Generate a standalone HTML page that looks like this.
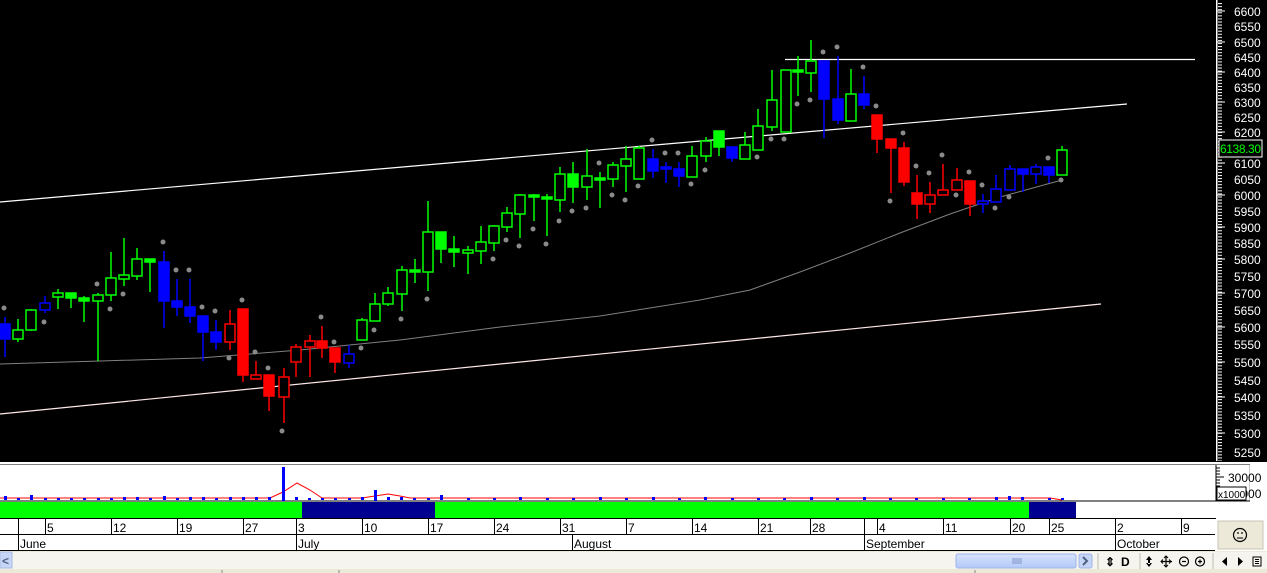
<!DOCTYPE html>
<html><head><meta charset="utf-8"><style>
html,body{margin:0;padding:0;width:1267px;height:573px;overflow:hidden;background:#fff}
svg{display:block}
text{font-family:"Liberation Sans",sans-serif}
</style></head><body>
<svg width="1267" height="573" viewBox="0 0 1267 573" xmlns="http://www.w3.org/2000/svg">
<defs>
<pattern id="tk" x="0" y="0" width="6" height="3.07" patternUnits="userSpaceOnUse"><rect x="0" y="0" width="5" height="1" fill="#fff"/></pattern>
<linearGradient id="thumb" x1="0" y1="0" x2="0" y2="1"><stop offset="0" stop-color="#d6e2fd"/><stop offset="1" stop-color="#b3c9f7"/></linearGradient>
</defs>
<rect x="0" y="0" width="1267" height="462" fill="#000"/>
<!-- axis -->
<rect x="1216" y="0" width="1.5" height="461" fill="#fff"/>
<rect x="1217" y="2" width="5" height="459" fill="url(#tk)"/>
<g fill="#fff" font-size="12">
<text x="1234" y="16">6600</text><text x="1234" y="31">6550</text><text x="1234" y="47">6500</text><text x="1234" y="62">6450</text><text x="1234" y="77">6400</text><text x="1234" y="92">6350</text><text x="1234" y="107">6300</text><text x="1234" y="122">6250</text><text x="1234" y="137">6200</text><text x="1234" y="168">6100</text><text x="1234" y="184">6050</text><text x="1234" y="200">6000</text><text x="1234" y="216">5950</text><text x="1234" y="232">5900</text><text x="1234" y="248">5850</text><text x="1234" y="264">5800</text><text x="1234" y="281">5750</text><text x="1234" y="298">5700</text><text x="1234" y="315">5650</text><text x="1234" y="332">5600</text><text x="1234" y="349">5550</text><text x="1234" y="367">5500</text><text x="1234" y="385">5450</text><text x="1234" y="402">5400</text><text x="1234" y="420">5350</text><text x="1234" y="438">5300</text><text x="1234" y="457">5250</text>
</g>
<g stroke="#fff" stroke-width="1">
<line x1="1217" y1="11" x2="1225" y2="11"/><line x1="1217" y1="42" x2="1225" y2="42"/><line x1="1217" y1="72" x2="1225" y2="72"/><line x1="1217" y1="102" x2="1225" y2="102"/><line x1="1217" y1="132" x2="1225" y2="132"/><line x1="1217" y1="163" x2="1225" y2="163"/><line x1="1217" y1="195" x2="1225" y2="195"/><line x1="1217" y1="227" x2="1225" y2="227"/><line x1="1217" y1="259" x2="1225" y2="259"/><line x1="1217" y1="293" x2="1225" y2="293"/><line x1="1217" y1="327" x2="1225" y2="327"/><line x1="1217" y1="362" x2="1225" y2="362"/><line x1="1217" y1="397" x2="1225" y2="397"/><line x1="1217" y1="433" x2="1225" y2="433"/>
</g>
<rect x="1219" y="140" width="43" height="17" fill="#000" stroke="#fff" stroke-width="1"/>
<text x="1220" y="153" fill="#00ff00" font-size="12" textLength="41">6138.30</text>
<!-- lines -->
<line x1="0" y1="202" x2="1127" y2="104" stroke="#fff" stroke-width="1.2"/>
<line x1="0" y1="414" x2="1101" y2="304" stroke="#ffe8e8" stroke-width="1.2"/>
<line x1="785" y1="59.5" x2="1195" y2="59.5" stroke="#fff" stroke-width="1.2"/>
<polyline fill="none" stroke="#808080" stroke-width="1" points="0,364 100,361 200,358 300,350 400,340 500,327 600,316 700,300 750,290 800,272 850,253 900,233 950,214 1000,197 1062,180"/>
<!-- dots -->
<g fill="#8a8a8a">
<circle cx="4" cy="308" r="2.5"/><circle cx="44" cy="322" r="2.5"/><circle cx="97" cy="284" r="2.5"/><circle cx="110" cy="309" r="2.5"/><circle cx="123" cy="294" r="2.5"/><circle cx="163" cy="242" r="2.5"/><circle cx="176" cy="270" r="2.5"/><circle cx="189" cy="270" r="2.5"/><circle cx="202" cy="307" r="2.5"/><circle cx="215" cy="311" r="2.5"/><circle cx="229" cy="358" r="2.5"/><circle cx="242" cy="300" r="2.5"/><circle cx="255" cy="352" r="2.5"/><circle cx="268" cy="368" r="2.5"/><circle cx="282" cy="431" r="2.5"/><circle cx="321" cy="317" r="2.5"/><circle cx="334" cy="342" r="2.5"/><circle cx="361" cy="348" r="2.5"/><circle cx="374" cy="330" r="2.5"/><circle cx="401" cy="319" r="2.5"/><circle cx="427" cy="299" r="2.5"/><circle cx="493" cy="259" r="2.5"/><circle cx="506" cy="240" r="2.5"/><circle cx="519" cy="246" r="2.5"/><circle cx="533" cy="229" r="2.5"/><circle cx="546" cy="244" r="2.5"/><circle cx="559" cy="221" r="2.5"/><circle cx="572" cy="211" r="2.5"/><circle cx="586" cy="208" r="2.5"/><circle cx="599" cy="163" r="2.5"/><circle cx="612" cy="195" r="2.5"/><circle cx="625" cy="200" r="2.5"/><circle cx="638" cy="186" r="2.5"/><circle cx="652" cy="140" r="2.5"/><circle cx="665" cy="153" r="2.5"/><circle cx="678" cy="153" r="2.5"/><circle cx="691" cy="184" r="2.5"/><circle cx="705" cy="170" r="2.5"/><circle cx="757" cy="157" r="2.5"/><circle cx="771" cy="139" r="2.5"/><circle cx="784" cy="139" r="2.5"/><circle cx="797" cy="104" r="2.5"/><circle cx="810" cy="100" r="2.5"/><circle cx="823" cy="52" r="2.5"/><circle cx="837" cy="47" r="2.5"/><circle cx="863" cy="67" r="2.5"/><circle cx="876" cy="106" r="2.5"/><circle cx="890" cy="201" r="2.5"/><circle cx="903" cy="133" r="2.5"/><circle cx="916" cy="166" r="2.5"/><circle cx="929" cy="173" r="2.5"/><circle cx="942" cy="155" r="2.5"/><circle cx="956" cy="195" r="2.5"/><circle cx="969" cy="172" r="2.5"/><circle cx="982" cy="185" r="2.5"/><circle cx="995" cy="208" r="2.5"/><circle cx="1009" cy="197" r="2.5"/><circle cx="1048" cy="158" r="2.5"/><circle cx="1061" cy="180" r="2.5"/>
</g>
<!-- candles -->
<g stroke-width="1.5">
<g stroke="#0000ff" fill="#0000ff">
<line x1="5" y1="317" x2="5" y2="357"/><rect x="0" y="324" width="10" height="15"/>
<line x1="164" y1="251" x2="164" y2="328"/><rect x="159" y="262" width="10" height="39"/>
<line x1="177" y1="279" x2="177" y2="316"/><rect x="172" y="301" width="10" height="6"/>
<line x1="190" y1="279" x2="190" y2="323"/><rect x="185" y="307" width="10" height="9"/>
<line x1="203" y1="316" x2="203" y2="361"/><rect x="198" y="316" width="10" height="16"/>
<line x1="216" y1="320" x2="216" y2="350"/><rect x="211" y="332" width="10" height="10"/>
<line x1="653" y1="149" x2="653" y2="178"/><rect x="648" y="159" width="10" height="12"/>
<line x1="666" y1="162" x2="666" y2="183"/><rect x="661" y="167" width="10" height="2"/>
<line x1="679" y1="162" x2="679" y2="187"/><rect x="674" y="169" width="10" height="7"/>
<line x1="732" y1="146" x2="732" y2="162"/><rect x="727" y="147" width="10" height="11"/>
<line x1="824" y1="61" x2="824" y2="138"/><rect x="819" y="61" width="10" height="38"/>
<line x1="838" y1="56" x2="838" y2="124"/><rect x="833" y="99" width="10" height="21"/>
<line x1="864" y1="76" x2="864" y2="109"/><rect x="859" y="94" width="10" height="11"/>
<line x1="1023" y1="169" x2="1023" y2="192"/><rect x="1018" y="169" width="10" height="5"/>
<line x1="1049" y1="167" x2="1049" y2="183"/><rect x="1044" y="167" width="10" height="8"/>
</g>
<g stroke="#0000ff" fill="#000">
<line x1="45" y1="296" x2="45" y2="313"/><rect x="40" y="303" width="10" height="7"/>
<line x1="349" y1="345" x2="349" y2="368"/><rect x="344" y="354" width="10" height="9"/>
<line x1="983" y1="194" x2="983" y2="213"/><rect x="978" y="201" width="10" height="3"/>
<line x1="996" y1="175" x2="996" y2="202"/><rect x="991" y="189" width="10" height="13"/>
<line x1="1010" y1="165" x2="1010" y2="190"/><rect x="1005" y="169" width="10" height="21"/>
<line x1="1036" y1="164" x2="1036" y2="184"/><rect x="1031" y="167" width="10" height="7"/>
</g>
<g stroke="#ff0000" fill="#ff0000">
<line x1="243" y1="309" x2="243" y2="382"/><rect x="238" y="309" width="10" height="66"/>
<line x1="269" y1="375" x2="269" y2="411"/><rect x="264" y="375" width="10" height="21"/>
<line x1="322" y1="326" x2="322" y2="358"/><rect x="317" y="341" width="10" height="7"/>
<line x1="335" y1="348" x2="335" y2="373"/><rect x="330" y="348" width="10" height="14"/>
<line x1="877" y1="115" x2="877" y2="153"/><rect x="872" y="115" width="10" height="24"/>
<line x1="891" y1="139" x2="891" y2="193"/><rect x="886" y="139" width="10" height="9"/>
<line x1="904" y1="142" x2="904" y2="186"/><rect x="899" y="148" width="10" height="34"/>
<line x1="917" y1="175" x2="917" y2="219"/><rect x="912" y="193" width="10" height="11"/>
<line x1="970" y1="181" x2="970" y2="216"/><rect x="965" y="181" width="10" height="23"/>
</g>
<g stroke="#ff0000" fill="#000">
<line x1="230" y1="310" x2="230" y2="350"/><rect x="225" y="324" width="10" height="18"/>
<line x1="256" y1="361" x2="256" y2="379"/><rect x="251" y="375" width="10" height="4"/>
<line x1="284" y1="368" x2="284" y2="423"/><rect x="279" y="377" width="10" height="20"/>
<line x1="296" y1="344" x2="296" y2="377"/><rect x="291" y="347" width="10" height="15"/>
<line x1="310" y1="335" x2="310" y2="377"/><rect x="305" y="341" width="10" height="6"/>
<line x1="930" y1="182" x2="930" y2="213"/><rect x="925" y="195" width="10" height="9"/>
<line x1="943" y1="164" x2="943" y2="195"/><rect x="938" y="190" width="10" height="5"/>
<line x1="957" y1="168" x2="957" y2="190"/><rect x="952" y="180" width="10" height="10"/>
</g>
<g stroke="#00ff00" fill="#00ff00">
<line x1="71" y1="293" x2="71" y2="308"/><rect x="66" y="293" width="10" height="5"/>
<line x1="84" y1="296" x2="84" y2="322"/><rect x="79" y="298" width="10" height="3"/>
<line x1="150" y1="259" x2="150" y2="292"/><rect x="145" y="259" width="10" height="3"/>
<line x1="415" y1="259" x2="415" y2="283"/><rect x="410" y="270" width="10" height="2"/>
<line x1="441" y1="232" x2="441" y2="263"/><rect x="436" y="232" width="10" height="17"/>
<line x1="454" y1="236" x2="454" y2="267"/><rect x="449" y="249" width="10" height="3"/>
<line x1="534" y1="194" x2="534" y2="221"/><rect x="529" y="195" width="10" height="2"/>
<line x1="547" y1="194" x2="547" y2="236"/><rect x="542" y="197" width="10" height="2"/>
<line x1="573" y1="162" x2="573" y2="203"/><rect x="568" y="174" width="10" height="13"/>
<line x1="600" y1="172" x2="600" y2="208"/><rect x="595" y="178" width="10" height="2"/>
<line x1="719" y1="131" x2="719" y2="156"/><rect x="714" y="131" width="10" height="16"/>
<line x1="798" y1="56" x2="798" y2="96"/><rect x="793" y="70" width="10" height="2"/>
</g>
<g stroke="#00ff00" fill="#000">
<line x1="18" y1="319" x2="18" y2="342"/><rect x="13" y="330" width="10" height="9"/>
<line x1="31" y1="309" x2="31" y2="331"/><rect x="26" y="310" width="10" height="20"/>
<line x1="58" y1="289" x2="58" y2="309"/><rect x="53" y="293" width="10" height="4"/>
<line x1="98" y1="293" x2="98" y2="361"/><rect x="93" y="295" width="10" height="6"/>
<line x1="111" y1="252" x2="111" y2="301"/><rect x="106" y="278" width="10" height="17"/>
<line x1="124" y1="238" x2="124" y2="286"/><rect x="119" y="275" width="10" height="4"/>
<line x1="137" y1="248" x2="137" y2="280"/><rect x="132" y="259" width="10" height="17"/>
<line x1="362" y1="318" x2="362" y2="340"/><rect x="357" y="320" width="10" height="20"/>
<line x1="375" y1="293" x2="375" y2="321"/><rect x="370" y="304" width="10" height="17"/>
<line x1="388" y1="287" x2="388" y2="306"/><rect x="383" y="293" width="10" height="11"/>
<line x1="402" y1="266" x2="402" y2="311"/><rect x="397" y="270" width="10" height="24"/>
<line x1="428" y1="201" x2="428" y2="291"/><rect x="423" y="232" width="10" height="40"/>
<line x1="468" y1="246" x2="468" y2="274"/><rect x="463" y="250" width="10" height="3"/>
<line x1="481" y1="226" x2="481" y2="264"/><rect x="476" y="242" width="10" height="9"/>
<line x1="494" y1="225" x2="494" y2="251"/><rect x="489" y="226" width="10" height="17"/>
<line x1="507" y1="207" x2="507" y2="232"/><rect x="502" y="213" width="10" height="14"/>
<line x1="520" y1="194" x2="520" y2="238"/><rect x="515" y="195" width="10" height="19"/>
<line x1="560" y1="167" x2="560" y2="212"/><rect x="555" y="174" width="10" height="26"/>
<line x1="587" y1="149" x2="587" y2="200"/><rect x="582" y="176" width="10" height="11"/>
<line x1="613" y1="162" x2="613" y2="187"/><rect x="608" y="165" width="10" height="14"/>
<line x1="626" y1="146" x2="626" y2="192"/><rect x="621" y="159" width="10" height="7"/>
<line x1="639" y1="146" x2="639" y2="179"/><rect x="634" y="148" width="10" height="31"/>
<line x1="692" y1="146" x2="692" y2="177"/><rect x="687" y="156" width="10" height="21"/>
<line x1="706" y1="137" x2="706" y2="162"/><rect x="701" y="141" width="10" height="15"/>
<line x1="745" y1="132" x2="745" y2="159"/><rect x="740" y="145" width="10" height="14"/>
<line x1="758" y1="109" x2="758" y2="150"/><rect x="753" y="126" width="10" height="24"/>
<line x1="772" y1="70" x2="772" y2="131"/><rect x="767" y="100" width="10" height="27"/>
<line x1="786" y1="70" x2="786" y2="132"/><rect x="781" y="70" width="10" height="62"/>
<line x1="811" y1="40" x2="811" y2="92"/><rect x="806" y="61" width="10" height="12"/>
<line x1="851" y1="69" x2="851" y2="121"/><rect x="846" y="94" width="10" height="27"/>
<line x1="1062" y1="146" x2="1062" y2="175"/><rect x="1057" y="150" width="10" height="25"/>
</g>
</g>
<!-- separator -->
<rect x="0" y="462" width="1267" height="2" fill="#fff"/>
<rect x="0" y="464" width="1250" height="1" fill="#808080"/>
<!-- volume panel -->
<rect x="0" y="465" width="1250" height="36" fill="#fff"/>
<rect x="1249" y="465" width="1" height="36" fill="#ccc"/>
<line x1="1216" y1="465" x2="1216" y2="501" stroke="#000" stroke-width="1"/>
<g stroke="#000"><line x1="1216" y1="468" x2="1220" y2="468"/><line x1="1216" y1="471" x2="1220" y2="471"/><line x1="1216" y1="474" x2="1220" y2="474"/><line x1="1216" y1="477" x2="1224" y2="477"/><line x1="1216" y1="480" x2="1220" y2="480"/><line x1="1216" y1="483" x2="1220" y2="483"/><line x1="1216" y1="486" x2="1220" y2="486"/></g>
<text x="1228" y="482" font-size="12" fill="#000">30000</text>
<text x="1228" y="498" font-size="12" fill="#000">10000</text>
<rect x="1217" y="487" width="29" height="13" fill="#fff" stroke="#000" stroke-width="1"/>
<text x="1218" y="498" font-size="10" fill="#000">x1000</text>
<line x1="0" y1="501" x2="1250" y2="501" stroke="#000" stroke-width="1"/>
<polyline fill="none" stroke="#ff0000" stroke-width="1" points="0,498 270,498 283,492 297,483 310,490 322,498 362,498 375,496 388,494 400,496 410,498 640,498 1050,498 1062,500"/>
<g fill="#0000ff">
<rect x="282" y="467" width="3" height="34"/><rect x="374" y="490" width="3" height="11"/>
<rect x="4" y="496" width="3" height="4"/><rect x="17" y="498" width="3" height="2"/><rect x="30" y="495" width="3" height="5"/><rect x="44" y="498" width="3" height="2"/><rect x="57" y="498" width="3" height="2"/><rect x="70" y="498" width="3" height="2"/><rect x="83" y="498" width="3" height="2"/><rect x="97" y="498" width="3" height="2"/><rect x="110" y="498" width="3" height="2"/><rect x="123" y="497" width="3" height="3"/><rect x="136" y="497" width="3" height="3"/><rect x="149" y="498" width="3" height="2"/><rect x="163" y="496" width="3" height="4"/><rect x="176" y="498" width="3" height="2"/><rect x="189" y="497" width="3" height="3"/><rect x="202" y="497" width="3" height="3"/><rect x="215" y="498" width="3" height="2"/><rect x="229" y="497" width="3" height="3"/><rect x="242" y="497" width="3" height="3"/><rect x="255" y="497" width="3" height="3"/><rect x="268" y="497" width="3" height="3"/><rect x="295" y="497" width="3" height="3"/><rect x="308" y="498" width="3" height="2"/><rect x="321" y="498" width="3" height="2"/><rect x="334" y="498" width="3" height="2"/><rect x="348" y="498" width="3" height="2"/><rect x="361" y="497" width="3" height="3"/><rect x="387" y="497" width="3" height="3"/><rect x="400" y="497" width="3" height="3"/><rect x="413" y="498" width="3" height="2"/><rect x="427" y="498" width="3" height="2"/><rect x="440" y="495" width="3" height="5"/><rect x="467" y="498" width="3" height="2"/><rect x="493" y="498" width="3" height="2"/><rect x="519" y="497" width="3" height="3"/><rect x="546" y="498" width="3" height="2"/><rect x="572" y="498" width="3" height="2"/><rect x="599" y="497" width="3" height="3"/><rect x="625" y="498" width="3" height="2"/><rect x="652" y="497" width="3" height="3"/><rect x="678" y="498" width="3" height="2"/><rect x="704" y="497" width="3" height="3"/><rect x="731" y="498" width="3" height="2"/><rect x="757" y="498" width="3" height="2"/><rect x="783" y="498" width="3" height="2"/><rect x="810" y="497" width="3" height="3"/><rect x="836" y="498" width="3" height="2"/><rect x="863" y="497" width="3" height="3"/><rect x="889" y="498" width="3" height="2"/><rect x="915" y="498" width="3" height="2"/><rect x="942" y="498" width="3" height="2"/><rect x="968" y="498" width="3" height="2"/><rect x="995" y="497" width="3" height="3"/><rect x="1008" y="496" width="3" height="4"/><rect x="1021" y="497" width="3" height="3"/><rect x="1048" y="498" width="3" height="2"/><rect x="1061" y="498" width="3" height="2"/>
</g>
<!-- band -->
<rect x="0" y="502" width="1250" height="16" fill="#fff"/>
<rect x="0" y="502" width="302" height="16" fill="#00ff00"/>
<rect x="302" y="502" width="133" height="16" fill="#000090"/>
<rect x="435" y="502" width="594" height="16" fill="#00ff00"/>
<rect x="1029" y="502" width="47" height="16" fill="#000090"/>
<line x1="0" y1="518.5" x2="1216" y2="518.5" stroke="#000"/>
<!-- dates -->
<rect x="0" y="519" width="1215" height="32" fill="#fff"/>
<line x1="0" y1="534.5" x2="1215" y2="534.5" stroke="#000"/>
<line x1="0" y1="550.5" x2="1215" y2="550.5" stroke="#000"/>
<g stroke="#000">
<line x1="18.5" y1="519" x2="18.5" y2="551"/><line x1="45.5" y1="519" x2="45.5" y2="534"/><line x1="111.5" y1="519" x2="111.5" y2="534"/><line x1="177.5" y1="519" x2="177.5" y2="534"/><line x1="243.5" y1="519" x2="243.5" y2="534"/><line x1="296.5" y1="519" x2="296.5" y2="551"/><line x1="362.5" y1="519" x2="362.5" y2="534"/><line x1="428.5" y1="519" x2="428.5" y2="534"/><line x1="494.5" y1="519" x2="494.5" y2="534"/><line x1="560.5" y1="519" x2="560.5" y2="534"/><line x1="572.5" y1="535" x2="572.5" y2="551"/><line x1="626.5" y1="519" x2="626.5" y2="534"/><line x1="692.5" y1="519" x2="692.5" y2="534"/><line x1="758.5" y1="519" x2="758.5" y2="534"/><line x1="810.5" y1="519" x2="810.5" y2="534"/><line x1="864.5" y1="519" x2="864.5" y2="551"/><line x1="877.5" y1="519" x2="877.5" y2="534"/><line x1="943.5" y1="519" x2="943.5" y2="534"/><line x1="1010.5" y1="519" x2="1010.5" y2="534"/><line x1="1049.5" y1="519" x2="1049.5" y2="534"/><line x1="1115.5" y1="519" x2="1115.5" y2="551"/><line x1="1181.5" y1="519" x2="1181.5" y2="534"/>
</g>
<g font-size="12" fill="#000">
<text x="47" y="532">5</text><text x="113" y="532">12</text><text x="179" y="532">19</text><text x="245" y="532">27</text><text x="298" y="532">3</text><text x="364" y="532">10</text><text x="430" y="532">17</text><text x="496" y="532">24</text><text x="562" y="532">31</text><text x="628" y="532">7</text><text x="694" y="532">14</text><text x="760" y="532">21</text><text x="812" y="532">28</text><text x="879" y="532">4</text><text x="945" y="532">11</text><text x="1012" y="532">20</text><text x="1051" y="532">25</text><text x="1117" y="532">2</text><text x="1183" y="532">9</text>
<text x="20" y="548">June</text><text x="298" y="548">July</text><text x="574" y="548">August</text><text x="866" y="548">September</text><text x="1117" y="548">October</text>
</g>
<!-- smiley box -->
<rect x="1215" y="519" width="52" height="32" fill="#fff"/>
<rect x="1218" y="521" width="45" height="28" fill="#ece9d8" stroke="#c8c4b4"/>
<circle cx="1240" cy="535" r="6.5" fill="none" stroke="#000" stroke-width="1.2"/>
<circle cx="1238" cy="533" r="0.9" fill="#000"/><circle cx="1242" cy="533" r="0.9" fill="#000"/>
<line x1="1237" y1="538" x2="1243" y2="538" stroke="#000"/>
<!-- scroll row -->
<rect x="0" y="551" width="1267" height="22" fill="#ece9d8"/>
<rect x="0" y="552" width="1267" height="17" fill="#f5f4ee"/>
<rect x="0" y="552" width="12" height="16" fill="#c6d5f5" stroke="#a8bde6"/>
<text x="2" y="565" font-size="12" fill="#4d6185" font-weight="bold">&lt;</text>
<rect x="956" y="554" width="120" height="14" rx="2" fill="url(#thumb)" stroke="#9eb5ea"/>
<g stroke="#7e95c7"><line x1="1013" y1="558" x2="1013" y2="564"/><line x1="1015" y1="558" x2="1015" y2="564"/><line x1="1017" y1="558" x2="1017" y2="564"/><line x1="1019" y1="558" x2="1019" y2="564"/><line x1="1021" y1="558" x2="1021" y2="564"/></g>
<rect x="1079" y="554" width="13" height="14" rx="2" fill="#c6d5f5" stroke="#9eb5ea"/>
<path d="M1083 557 L1087 561 L1083 565" fill="none" stroke="#4d6185" stroke-width="2"/>
<line x1="1098" y1="553" x2="1098" y2="569" stroke="#c0bdb0"/>
<line x1="1140" y1="553" x2="1140" y2="569" stroke="#c0bdb0"/>
<line x1="1213" y1="553" x2="1213" y2="569" stroke="#c0bdb0"/>
<g font-size="12" fill="#000" font-weight="bold">
<text x="1105" y="566">⇕</text><text x="1121" y="566" font-family="Liberation Serif">D</text>
</g>
<path d="M1149 556 L1152 560 L1146 560 Z M1149 567 L1152 563 L1146 563 Z M1148 559 h2 v5 h-2z" fill="#000"/>
<path d="M1166 556 v11 M1161 561.5 h11" stroke="#000" stroke-width="1.2"/>
<path d="M1164 558 l2-2 l2 2 M1164 565 l2 2 l2-2 M1163 559.5 l-2 2 l2 2 M1169 559.5 l2 2 l-2 2" fill="none" stroke="#000"/>
<circle cx="1184" cy="561.5" r="4.5" fill="none" stroke="#000" stroke-width="1.2"/><line x1="1182" y1="561.5" x2="1186" y2="561.5" stroke="#000" stroke-width="1.2"/>
<circle cx="1200" cy="561.5" r="4.5" fill="none" stroke="#000" stroke-width="1.2"/><path d="M1198 561.5 h4 M1200 559.5 v4" stroke="#000" stroke-width="1.2"/>
<path d="M1222 561.5 L1227 557 L1227 566 Z" fill="#000"/>
<path d="M1238 557 L1243 561.5 L1238 566 Z" fill="#000"/>
<rect x="1253" y="557" width="8" height="9" fill="none" stroke="#000"/><path d="M1255 559.5 h4 M1255 561.5 h4 M1255 563.5 h4" stroke="#000"/>
<line x1="222" y1="570" x2="222" y2="573" stroke="#888"/><line x1="339" y1="570" x2="339" y2="573" stroke="#888"/><line x1="975" y1="570" x2="975" y2="573" stroke="#888"/>
</svg>
</body></html>
